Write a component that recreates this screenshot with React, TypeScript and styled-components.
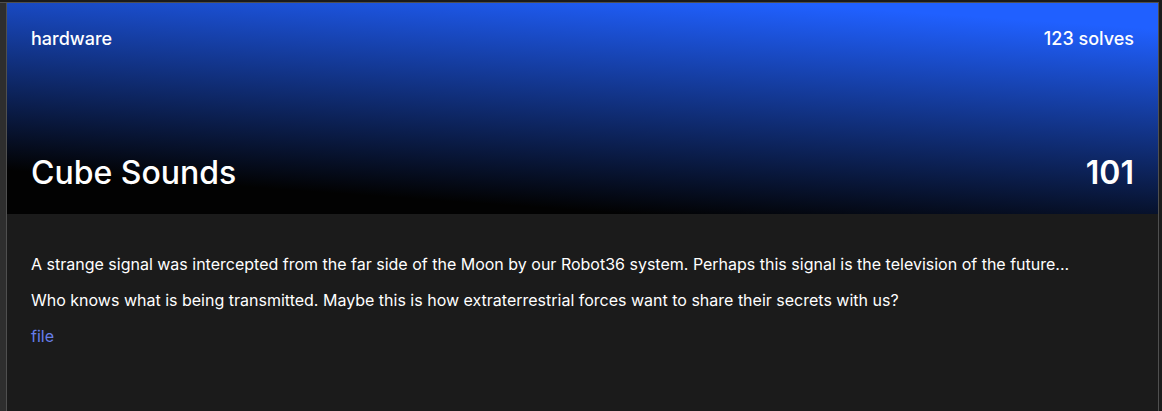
import React from "react";
import styled, { createGlobalStyle } from "styled-components";

const GlobalStyle = createGlobalStyle`
  * { box-sizing: border-box; }
  body {
    margin: 0;
    background: #1b1b1b;
    color: #ffffff;
    font-family: Inter, "Liberation Sans", sans-serif;
  }
`;

const Page = styled.div`
  display: flex;
  min-height: 100vh;
  padding: 2px 3px 0 0;
`;

const Gutter = styled.div`
  flex: 0 0 6px;
  border-top: 1px solid #4f4f4f;
  background: #2e2e2e;
`;

const Card = styled.article`
  flex: 1;
  min-width: 0;
  border: 1px solid #4f4f4f;
  border-bottom: 0;
  background: #1b1b1b;
`;

const Banner = styled.header`
  display: flex;
  flex-direction: column;
  justify-content: space-between;
  gap: 105px;
  padding: 24px;
  background: linear-gradient(4deg, #020202 15%, #2060ff 91%);
`;

const BannerRow = styled.div`
  display: flex;
  align-items: center;
  justify-content: space-between;
  gap: 16px;
`;

const Meta = styled.span`
  font-size: 18px;
  font-weight: 500;
  line-height: 24px;
`;

const Title = styled.h1`
  margin: 0;
  font-size: 32px;
  font-weight: 500;
  line-height: 34px;
`;

const Score = styled.span`
  font-size: 32px;
  font-weight: 600;
  line-height: 34px;
`;

const Description = styled.section`
  display: flex;
  flex-direction: column;
  align-items: flex-start;
  gap: 12px;
  padding: 38px 24px;
  font-size: 16px;
  line-height: 24px;
`;

const Paragraph = styled.p`
  margin: 0;
`;

const FileLink = styled.a`
  color: #667eea;
  text-decoration: none;
`;

export default function App() {
  return (
    <>
      <GlobalStyle />
      <Page>
        <Gutter />
        <Card>
          <Banner>
            <BannerRow>
              <Meta>hardware</Meta>
              <Meta>123 solves</Meta>
            </BannerRow>
            <BannerRow>
              <Title>Cube Sounds</Title>
              <Score>101</Score>
            </BannerRow>
          </Banner>
          <Description>
            <Paragraph>
              A strange signal was intercepted from the far side of the Moon by our Robot36 system. Perhaps this signal is
              the television of the future...
            </Paragraph>
            <Paragraph>
              Who knows what is being transmitted. Maybe this is how extraterrestrial forces want to share their secrets
              with us?
            </Paragraph>
            <FileLink href="#file">file</FileLink>
          </Description>
        </Card>
      </Page>
    </>
  );
}
